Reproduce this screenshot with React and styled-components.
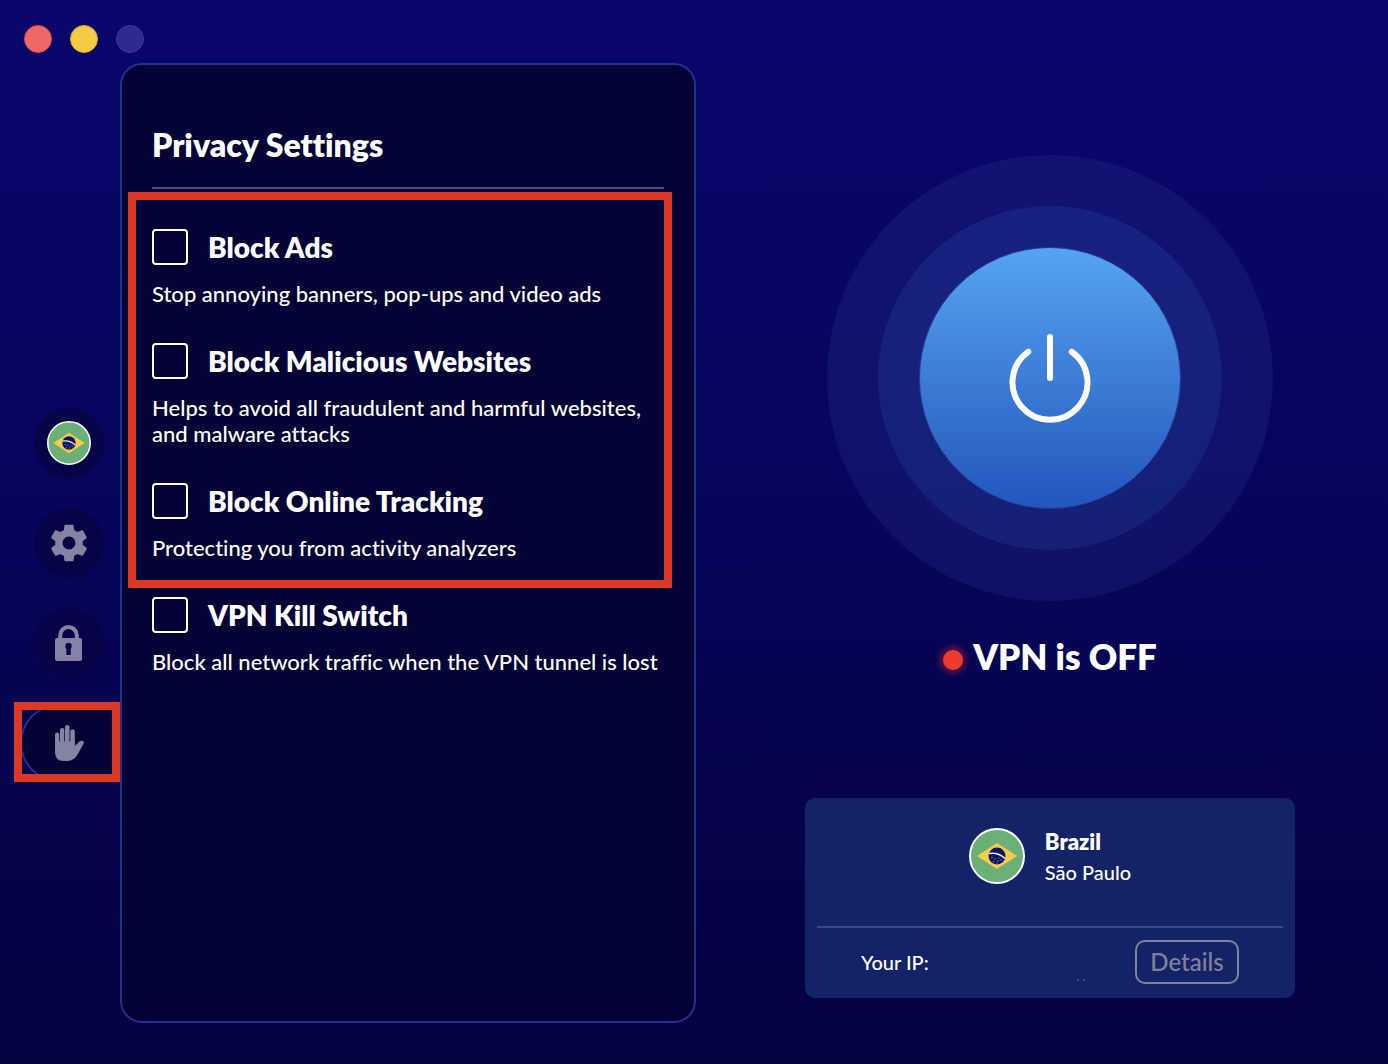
import React, { useState } from 'react';
import styled, { createGlobalStyle } from 'styled-components'


const GlobalStyle = createGlobalStyle`
  * {
    box-sizing: border-box;
  }
  body {
    margin: 0;
    color: #fff;
    background: #04023f;
    font-family: Lato, "Noto Sans", sans-serif;
    font-variant-ligatures: none;
  }
  h1, h2, p {
    margin: 0;
  }
  button, input {
    font-family: inherit;
    margin: 0;
  }
`

const Window = styled.div`
  min-height: 100vh;
  display: grid;
  grid-template-columns: 120px minmax(420px, 576px) 1fr;
  grid-template-rows: 63px 1fr;
  background: linear-gradient(#09076c, #06055a 50%, #04023f);
`
const TitleBar = styled.header`
  grid-column: 1 / -1;
  display: flex;
  gap: 18px;
  padding: 25px 24px 0;
`
const Light = styled.button`
  width: 28px;
  height: 28px;
  padding: 0;
  border-radius: 50%;
  border: 1px solid ${(props) => props.$border};
  background: ${(props) => props.$color};
`

const Sidebar = styled.nav`
  display: flex;
  flex-direction: column;
  align-items: center;
  justify-content: center;
  gap: 30px;
  padding: 100px 0 41px;
`
const RoundButton = styled.button`
  width: 70px;
  height: 70px;
  margin-left: 18px;
  padding: 0;
  display: grid;
  place-items: center;
  border: 0;
  border-radius: 50%;
  background: #050446;
  cursor: pointer;
`
const ActiveTab = styled.button`
  position: relative;
  align-self: stretch;
  height: 78px;
  margin: -4px 0 -4px 20px;
  padding: 0 4px 0 0;
  display: grid;
  place-items: center;
  border: 2px solid #23318f;
  border-right: 0;
  border-radius: 40px 0 0 40px;
  background: #040336;
  cursor: pointer;

  &::after {
    content: "";
    position: absolute;
    inset: -4px 0 -2px -8px;
    border: 8px solid #dc3826;
    pointer-events: none;
  }
`
const Glyph = styled.svg`
  display: block;
  width: ${(props) => props.$size}px;
  height: ${(props) => props.$size}px;
`

const Panel = styled.section`
  margin-bottom: 41px;
  padding: 59px 30px;
  border: 2px solid #23318f;
  border-radius: 22px;
  background: #040335;
`
const PanelTitle = styled.h1`
  padding-bottom: 21px;
  margin-bottom: 3px;
  border-bottom: 2px solid #4e4d72;
  font-size: 32px;
  line-height: 42px;
  font-weight: 800;
`
const Marked = styled.div`
  margin: 0 -8px 9px -24px;
  padding: 29px 0 19px 16px;
  border: 8px solid #dc3826;
`
const Options = styled.div`
  display: flex;
  flex-direction: column;
  gap: 36px;
`
const OptionLabel = styled.label`
  display: flex;
  align-items: center;
  gap: 20px;
  margin-bottom: 16px;
  font-size: 28px;
  line-height: 36px;
  font-weight: 800;
  cursor: pointer;
`
const Box = styled.input`
  appearance: none;
  width: 36px;
  height: 36px;
  border: 2px solid #fff;
  border-radius: 4px;
  cursor: pointer;

  &:checked {
    background: #3c7fdc;
  }
`
const OptionText = styled.p`
  font-size: 22px;
  line-height: 26px;
  font-weight: 500;
`

const Main = styled.main`
  display: flex;
  flex-direction: column;
  align-items: center;
  padding: 92px 16px 66px 32px;
`
const Ring = styled.div`
  display: grid;
  place-items: center;
  width: ${(props) => props.$size}px;
  height: ${(props) => props.$size}px;
  border-radius: 50%;
  background: ${(props) => props.$fill};
`
const PowerButton = styled.button`
  width: 262px;
  height: 262px;
  padding: 0;
  display: grid;
  place-items: center;
  border: 1px solid #243c9c;
  border-radius: 50%;
  background: linear-gradient(#56a4f3, #2256bb) border-box;
  cursor: pointer;
`
const Status = styled.h2`
  display: flex;
  align-items: center;
  gap: 10px;
  margin: 33px 0;
  font-size: 35px;
  line-height: 44px;
  font-weight: 800;
`
const Dot = styled.span`
  width: 20px;
  height: 20px;
  margin-top: 8px;
  border-radius: 50%;
  background: #ee3b2d;
  box-shadow: 0 0 5px 4px rgba(170, 30, 60, 0.45);
`

const Card = styled.section`
  width: 100%;
  max-width: 490px;
  margin-top: auto;
  padding: 0 12px;
  border-radius: 10px;
  background: #142367;
`
const Place = styled.div`
  display: flex;
  justify-content: center;
  gap: 20px;
  padding: 28px 0 38px;
  border-bottom: 2px solid #41477f;
`
const PlaceFlag = styled.div`
  padding-top: 2px;
`
const City = styled.p`
  font-size: 20px;
  line-height: 31px;
  font-weight: 500;
`
const Country = styled(City)`
  font-size: 22px;
  font-weight: 800;
`
const Address = styled.div`
  display: flex;
  align-items: center;
  justify-content: space-between;
  padding: 12px 44px 14px;
  font-size: 20px;
  line-height: 28px;
  font-weight: 500;
`
const Ip = styled.span`
  margin: 0 50px 0 auto;
  align-self: flex-end;
  color: #6d7a94;
  font-size: 12px;
  line-height: 14px;
`
const Details = styled.button`
  width: 104px;
  height: 44px;
  padding: 0 0 2px;
  border: 2px solid #82819d;
  border-radius: 10px;
  background: transparent;
  color: #82819d;
  font-size: 24px;
  font-weight: 500;
  cursor: pointer;
`


const iconColor = '#8583a3'

function Flag({ size }) {
  return (
    <Glyph $size={size} viewBox="0 0 56 56">
      <circle cx="28" cy="28" r="27" fill="#6ab077" stroke="#fff" strokeWidth="2" />
      <path d="M8 28L28 15L48 28L28 41Z" fill="#f3cd47" />
      <circle cx="28" cy="28" r="8.5" fill="#0c1464" />
      <path d="M20 25.5Q29 24 36 30.5" fill="none" stroke="#e8eef0" strokeWidth="1.6" />
      <g fill="#8aa0b8">
        <circle cx="23" cy="29.5" r="0.7" />
        <circle cx="26" cy="31" r="0.7" />
        <circle cx="24.5" cy="33.5" r="0.7" />
        <circle cx="29" cy="33" r="0.7" />
        <circle cx="32" cy="32" r="0.7" />
        <circle cx="28" cy="35" r="0.6" />
        <circle cx="30" cy="30" r="0.6" />
      </g>
    </Glyph>
  )
}

function Gear() {
  return (
    <Glyph $size={44} viewBox="0 0 24 24" fill={iconColor}>
      <path d="M19.43 12.98c.04-.32.07-.64.07-.98s-.03-.66-.07-.98l2.11-1.65c.19-.15.24-.42.12-.64l-2-3.46c-.12-.22-.39-.3-.61-.22l-2.49 1c-.52-.4-1.08-.73-1.69-.98l-.38-2.65C14.46 2.18 14.25 2 14 2h-4c-.25 0-.46.18-.49.42l-.38 2.65c-.61.25-1.17.59-1.69.98l-2.49-1c-.23-.09-.49 0-.61.22l-2 3.46c-.13.22-.07.49.12.64l2.11 1.65c-.04.32-.07.65-.07.98s.03.66.07.98l-2.11 1.65c-.19.15-.24.42-.12.64l2 3.46c.12.22.39.3.61.22l2.49-1c.52.4 1.08.73 1.69.98l.38 2.65c.03.24.24.42.49.42h4c.25 0 .46-.18.49-.42l.38-2.65c.61-.25 1.17-.59 1.69-.98l2.49 1c.23.09.49 0 .61-.22l2-3.46c.12-.22.07-.49-.12-.64l-2.11-1.65zM12 15.5c-1.93 0-3.5-1.57-3.5-3.5s1.57-3.5 3.5-3.5 3.5 1.57 3.5 3.5-1.57 3.5-3.5 3.5z" />
    </Glyph>
  )
}

function Lock() {
  return (
    <Glyph $size={36} viewBox="0 0 36 36">
      <path d="M9.2 15V10.4a8.3 8.3 0 0 1 16.6 0V15" fill="none" stroke={iconColor} strokeWidth="4" />
      <rect x="4" y="13" width="27" height="23" rx="2" fill={iconColor} />
      <circle cx="17.5" cy="21" r="3.2" fill="#050446" />
      <rect x="15.3" y="21" width="4.4" height="9" fill="#050446" />
    </Glyph>
  )
}

function Hand() {
  return (
    <Glyph $size={36} viewBox="0 0 36 36" fill={iconColor}>
      <rect x="4" y="7.5" width="4.3" height="18" rx="2.1" />
      <rect x="9" y="3" width="4.3" height="20" rx="2.1" />
      <rect x="14" y="0" width="4.5" height="22" rx="2.2" />
      <rect x="19.3" y="4.2" width="4.5" height="20" rx="2.2" />
      <path d="M4 16.5H23.8V21L28.2 16.8Q30 15.4 32 16Q33.5 16.6 32.6 18.4L26.6 29.6Q23 36 16.5 36H13Q4 36 4 27Z" />
    </Glyph>
  )
}

function PowerIcon() {
  return (
    <Glyph $size={140} viewBox="0 -2 140 140" fill="none" stroke="#fff" strokeWidth="6" strokeLinecap="round">
      <path d="M48.3 41.7A37.5 37.5 0 1 0 91.7 41.7" />
      <path d="M70 27V68" />
    </Glyph>
  )
}

const blockers = [
  { id: 'ads', title: 'Block Ads', text: 'Stop annoying banners, pop-ups and video ads' },
  { id: 'malicious', title: 'Block Malicious Websites', text: 'Helps to avoid all fraudulent and harmful websites, and malware attacks' },
  { id: 'tracking', title: 'Block Online Tracking', text: 'Protecting you from activity analyzers' },
]
const killSwitch = { id: 'kill', title: 'VPN Kill Switch', text: 'Block all network traffic when the VPN tunnel is lost' }

function Option({ option }) {
  const [checked, setChecked] = useState(false)

  return (
    <div>
      <OptionLabel htmlFor={option.id}>
        <Box type="checkbox" id={option.id} checked={checked} onChange={() => setChecked(!checked)} />
        {option.title}
      </OptionLabel>
      <OptionText>{option.text}</OptionText>
    </div>
  )
}

function App() {
  return (
    <Window>
      <GlobalStyle />
      <TitleBar>
        <Light aria-label="Close" $color="#ee6966" $border="#e2463f" />
        <Light aria-label="Minimize" $color="#f3cb45" $border="#dfa823" />
        <Light aria-label="Zoom" $color="#2e2b8c" $border="#3a3793" />
      </TitleBar>

      <Sidebar>
        <RoundButton aria-label="Locations"><Flag size={44} /></RoundButton>
        <RoundButton aria-label="Settings"><Gear /></RoundButton>
        <RoundButton aria-label="Security"><Lock /></RoundButton>
        <ActiveTab aria-label="Privacy"><Hand /></ActiveTab>
      </Sidebar>

      <Panel>
        <PanelTitle>Privacy Settings</PanelTitle>
        <Marked>
          <Options>
            {blockers.map((option) => <Option key={option.id} option={option} />)}
          </Options>
        </Marked>
        <Option option={killSwitch} />
      </Panel>

      <Main>
        <Ring $size={446} $fill="rgba(60, 90, 170, 0.16)">
          <Ring $size={344} $fill="rgba(80, 120, 220, 0.14)">
            <PowerButton aria-label="Turn VPN on"><PowerIcon /></PowerButton>
          </Ring>
        </Ring>
        <Status><Dot />VPN is OFF</Status>
        <Card>
          <Place>
            <PlaceFlag><Flag size={56} /></PlaceFlag>
            <div>
              <Country>Brazil</Country>
              <City>São Paulo</City>
            </div>
          </Place>
          <Address>
            Your IP:
            <Ip>. .</Ip>
            <Details>Details</Details>
          </Address>
        </Card>
      </Main>
    </Window>
  );
}

export default App;
